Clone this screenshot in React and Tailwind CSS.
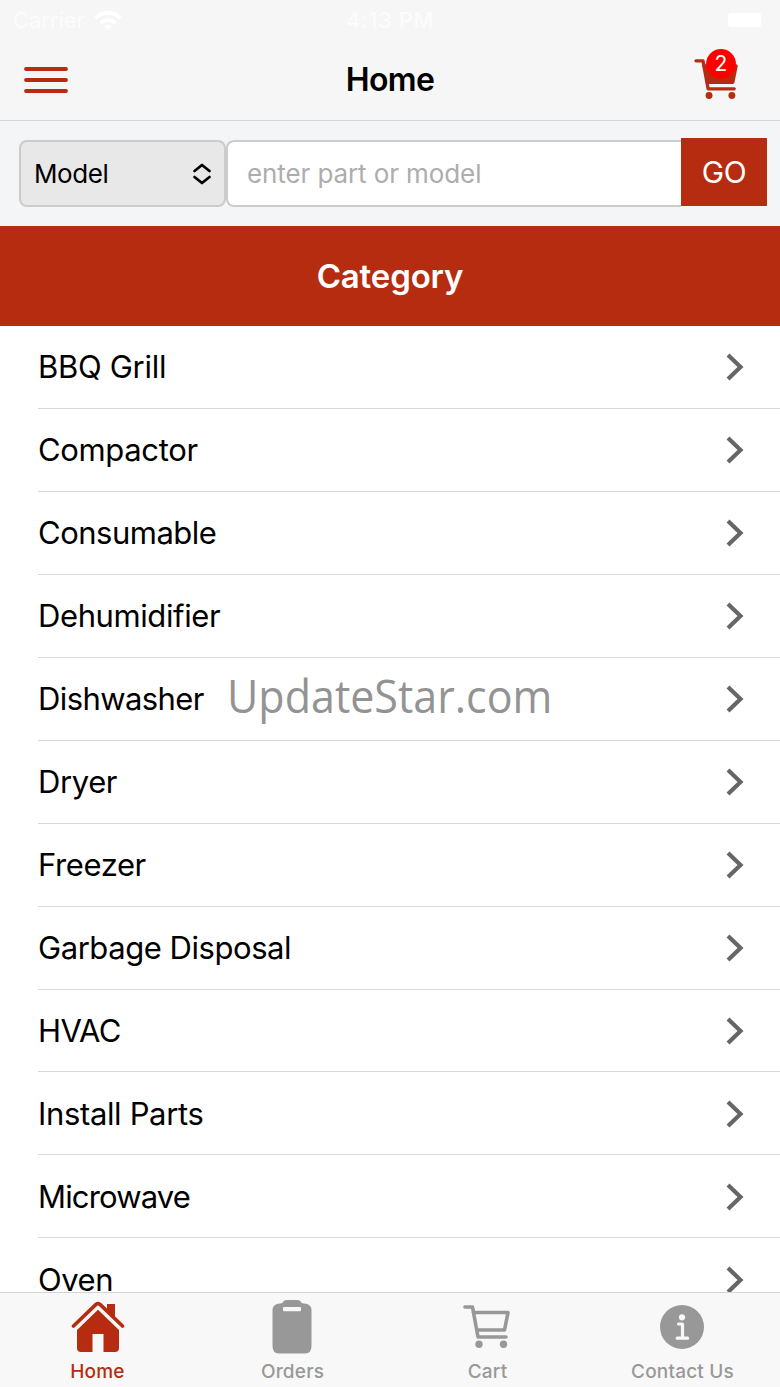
import React from 'react';

const categories = [
    { name: 'BBQ Grill', tracking: 'tracking-[-0.3px]' },
    { name: 'Compactor', tracking: 'tracking-[-0.35px]' },
    { name: 'Consumable', tracking: 'tracking-[-0.5px]' },
    { name: 'Dehumidifier', tracking: 'tracking-[-0.4px]' },
    { name: 'Dishwasher', tracking: 'tracking-[-0.6px]' },
    { name: 'Dryer', tracking: 'tracking-[-0.4px]' },
    { name: 'Freezer', tracking: 'tracking-[-0.4px]' },
    { name: 'Garbage Disposal', tracking: 'tracking-[-0.45px]' },
    { name: 'HVAC', tracking: 'tracking-[-0.6px]' },
    { name: 'Install Parts', tracking: 'tracking-[-0.35px]' },
    { name: 'Microwave', tracking: 'tracking-[-0.85px]' },
    { name: 'Oven', tracking: 'tracking-[-0.45px]' },
];

const WifiIcon = () => (
    <svg className="w-[28px] h-[19px]" viewBox="0 0 28 19" fill="none" stroke="#fff" strokeWidth="4">
        <path d="M1.5 7C8.5 0.3 19.5 0.3 26.5 7" />
        <path d="M6.5 12C11 8 17 8 21.5 12" />
        <path d="M14 19L10 15C12.3 13 15.7 13 18 15Z" fill="#fff" stroke="none" />
    </svg>
);

const MenuIcon = () => (
    <svg className="w-[44px] h-[28px]" viewBox="0 0 44 28" stroke="#b52c10" strokeWidth="3.8" strokeLinecap="round">
        <path d="M2 3H42M2 14H42M2 25H42" />
    </svg>
);

const CartIcon = ({ filled, className }) => (
    <svg className={className} viewBox="0 0 48 44" fill="none" stroke="currentColor" strokeWidth="3.6" strokeLinecap="round" strokeLinejoin="round">
        <path d="M2 2H9.5L15 32H43" />
        <path d="M10.5 7.5H45L41.5 25H14" fill={filled ? 'currentColor' : 'none'} />
        <circle cx="16" cy="39.2" r="3.7" fill="currentColor" stroke="none" />
        <circle cx="40.5" cy="39.2" r="3.7" fill="currentColor" stroke="none" />
    </svg>
);

const HomeIcon = () => (
    <svg className="w-[54px] h-[52px]" viewBox="0 0 54 52" fill="currentColor">
        <path d="M36 3H44V19L36 11Z" />
        <path d="M2.5 25L25 3.4Q27 1.8 29 3.4L51.5 25" fill="none" stroke="currentColor" strokeWidth="3.6" strokeLinecap="round" strokeLinejoin="round" />
        <path d="M27 8.8L48 29V47Q48 51 44 51H32.5V33H21.5V51H10Q6 51 6 47V29Z" />
    </svg>
);

const ClipboardIcon = () => (
    <svg className="mr-[2px] w-[40px] h-[54px]" viewBox="0 0 40 54" fill="currentColor">
        <path d="M8 3.5Q10 3.5 11 2Q12 0 15 0H25Q28 0 29 2Q30 3.5 32 3.5Q39.5 4 39.5 10V46Q39.5 53.5 33 53.5H7Q0.5 53.5 0.5 46V10Q0.5 4 8 3.5Z" />
        <rect x="11" y="7" width="18" height="4.2" rx="1" fill="#f8f8f8" />
    </svg>
);

const InfoIcon = () => (
    <svg className="mr-[2px] w-[44px] h-[44px]" viewBox="0 0 44 44" fill="none">
        <circle cx="22" cy="22" r="22" fill="currentColor" />
        <circle cx="22" cy="12.3" r="3.1" fill="#f8f8f8" />
        <path d="M18.5 19H22.5V33M17.2 33.2H27.6" stroke="#f8f8f8" strokeWidth="3.2" strokeLinecap="round" strokeLinejoin="round" />
    </svg>
);

const Tab = ({ label, active, children }) => (
    <button className={`flex w-[195px] flex-col items-center ${active ? 'text-[#b52c10]' : 'text-[#989898]'}`}>
        <span className="flex h-[67px] items-center justify-center">{children}</span>
        <span className="text-[19px] leading-[24px] font-medium tracking-[0.2px] whitespace-nowrap">{label}</span>
    </button>
);

const App = () => {
    return (
        <div className="relative flex h-[1387px] w-[780px] flex-col overflow-hidden bg-white font-['Inter',sans-serif] text-black">
            <header className="h-[121px] shrink-0 border-b border-[#d5d8da] bg-[#f6f6f6]">
                <div className="grid h-[40px] grid-cols-3 items-center pl-[13px] pr-[19px] text-[22px] text-white">
                    <div className="flex items-center gap-[9px]">
                        <span className="opacity-70">Carrier</span>
                        <WifiIcon />
                    </div>
                    <span className="pl-[6px] text-center font-medium tracking-[0.6px] whitespace-nowrap opacity-70">4:13 PM</span>
                    <span className="h-[14px] w-[33px] justify-self-end rounded-[3px] bg-white" />
                </div>
                <div className="grid h-[80px] grid-cols-3 items-center pl-6 pr-[41px]">
                    <MenuIcon />
                    <h1 className="pl-[17px] text-center text-[32px] font-semibold tracking-[-0.7px]">Home</h1>
                    <div className="relative mb-[2px] justify-self-end text-[#b52c10]">
                        <CartIcon filled className="h-[41px] w-[45px]" />
                        <span className="absolute top-[-10px] left-[12px] flex size-[30px] items-center justify-center rounded-full bg-[#ff0000] text-[21px] text-white">2</span>
                    </div>
                </div>
            </header>

            <div className="flex h-[105px] shrink-0 bg-[#f3f5f7] pt-[17px] pl-[19px]">
                <div className="mt-[2px] flex h-[67px] w-[207px] items-center justify-between rounded-[8px] border-2 border-[#cccccc] bg-[#e8e8e8] pr-[12px] pl-[13px]">
                    <span className="text-[26px] tracking-[-0.4px]">Model</span>
                    <svg className="w-[20px] h-[22px]" viewBox="0 0 20 22" fill="none" stroke="#000" strokeWidth="2.7" strokeLinecap="round" strokeLinejoin="round">
                        <path d="M2.5 8L10 2L17.5 8M2.5 14L10 20L17.5 14" />
                    </svg>
                </div>
                <div className="mt-[2px] flex h-[67px] w-[455px] items-center rounded-l-[8px] border-2 border-r-0 border-[#cccccc] bg-white pl-[19px]">
                    <span className="text-[26px] tracking-[-0.1px] text-[#adadad]">enter part or model</span>
                </div>
                <button className="h-[68px] w-[86px] bg-[#b52c10] text-[30px] tracking-[-0.5px] text-white">GO</button>
            </div>

            <div className="flex h-[100px] shrink-0 items-center justify-center bg-[#b52c10] pt-[2px]">
                <h2 className="text-[33px] font-semibold tracking-[-0.15px] text-white">Category</h2>
            </div>

            <ul className="min-h-0 flex-1 overflow-hidden pl-[38px]">
                {categories.map((category) => (
                    <li key={category.name} className="flex h-[82.95px] items-center justify-between border-b border-[#d8d8d8] pt-[1px] pr-[36px]">
                        <span className={`text-[31px] whitespace-nowrap ${category.tracking}`}>{category.name}</span>
                        <svg className="w-[18px] h-[28px]" viewBox="0 0 18 28" fill="none" stroke="#666" strokeWidth="4.2">
                            <path d="M2 2L14.5 14L2 26" />
                        </svg>
                    </li>
                ))}
            </ul>

            <nav className="flex h-[95px] shrink-0 border-t border-[#d5d5d5] bg-[#f8f8f8]">
                <Tab label="Home" active><HomeIcon /></Tab>
                <Tab label="Orders"><ClipboardIcon /></Tab>
                <Tab label="Cart"><CartIcon className="mr-px h-[44px] w-[48px]" /></Tab>
                <Tab label="Contact Us"><InfoIcon /></Tab>
            </nav>

            <span className="absolute top-[663px] left-[227px] origin-left scale-x-[0.935] font-['Open_Sans',sans-serif] text-[46px] leading-[64px] whitespace-nowrap text-[#939393]">UpdateStar.com</span>
        </div>
    );
};

export default App;
